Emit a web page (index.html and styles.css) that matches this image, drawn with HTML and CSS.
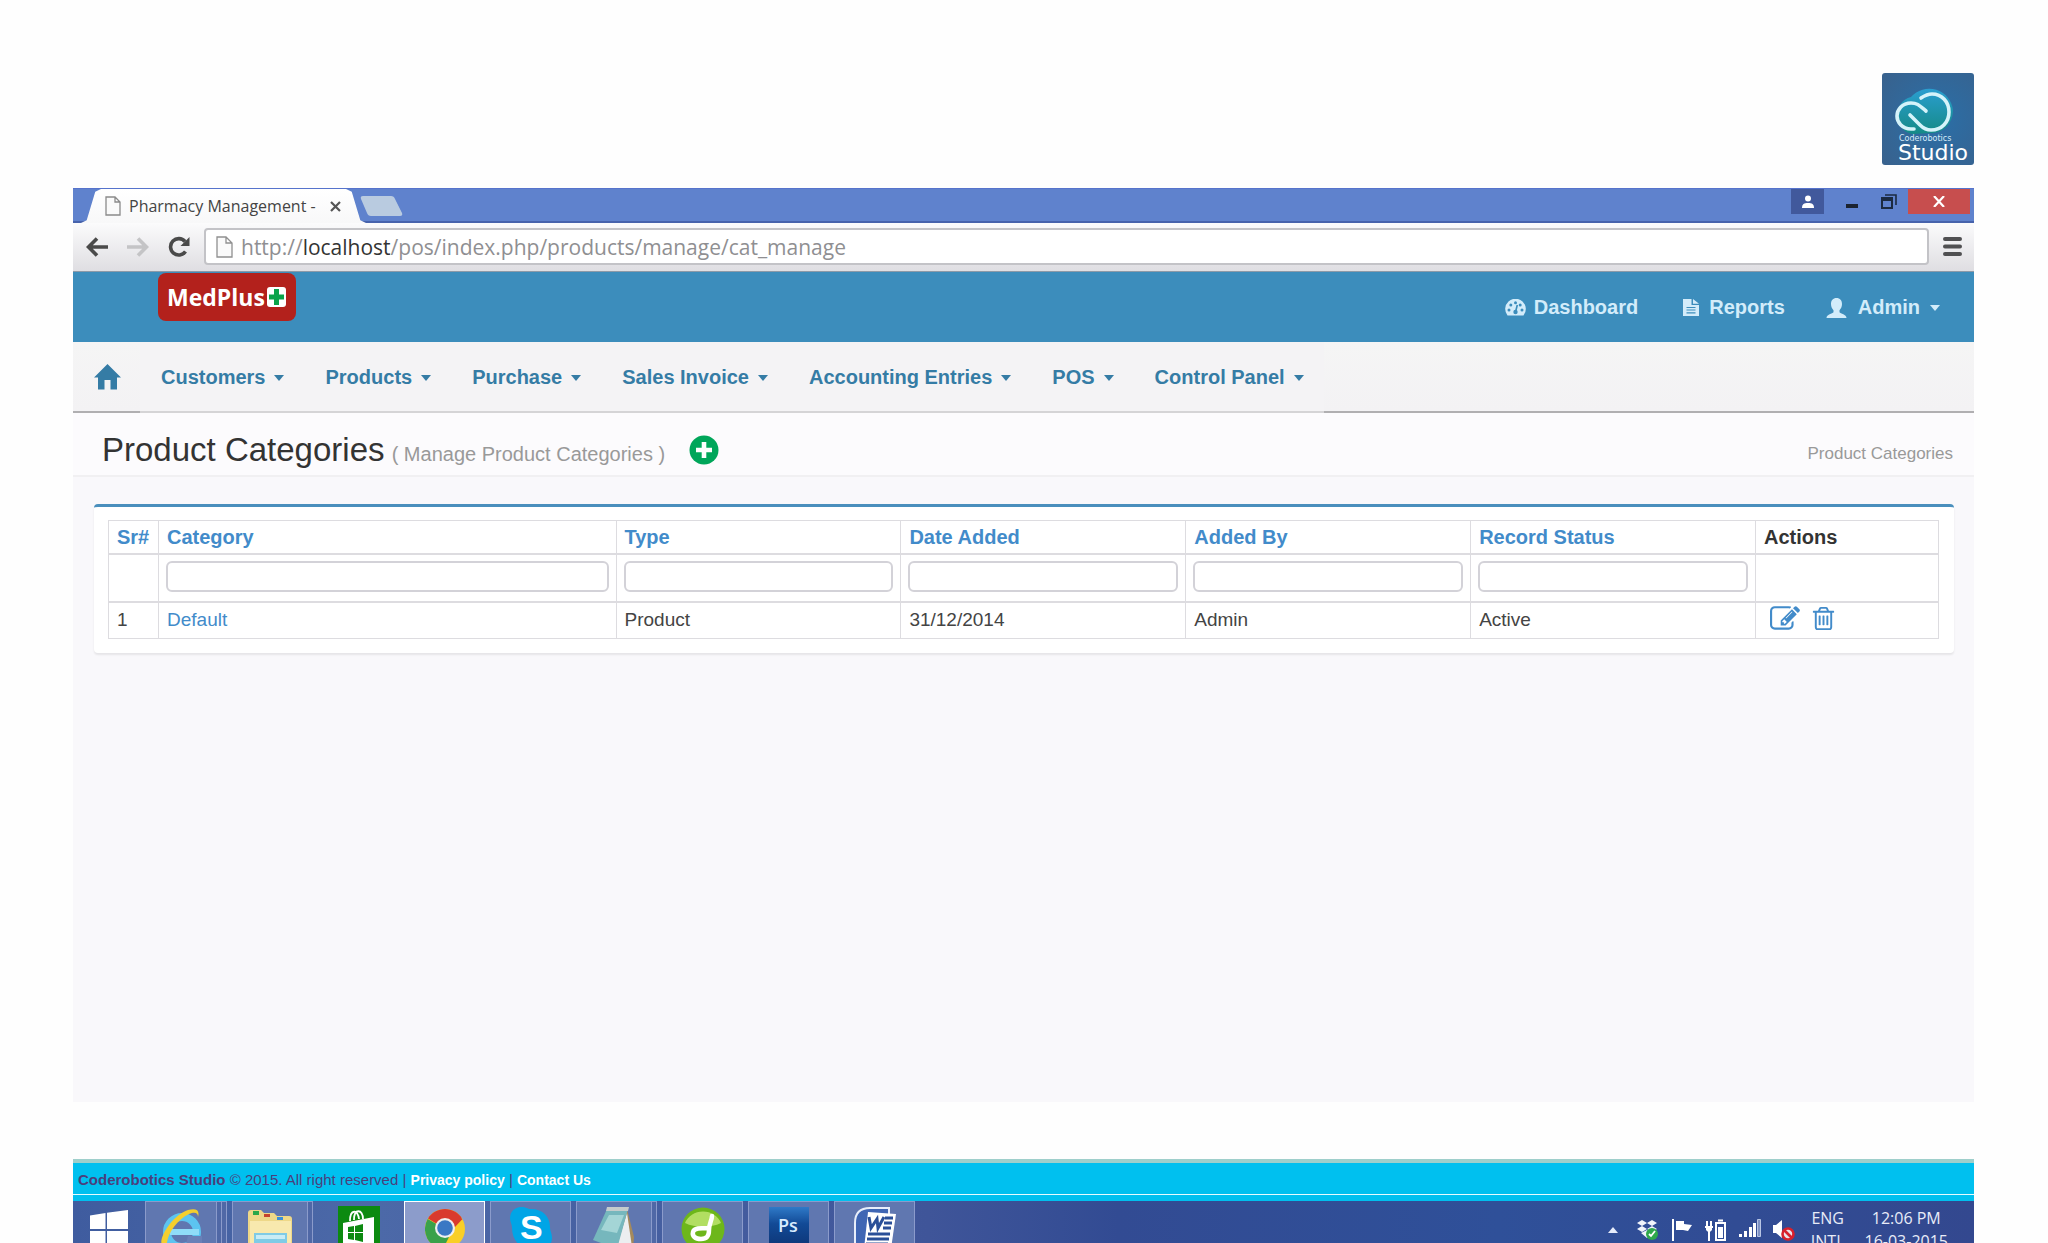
FILE: index.html
```html
<!DOCTYPE html>
<html lang="en">
<head>
<meta charset="utf-8">
<title>Pharmacy Management - Product Categories</title>
<link rel="stylesheet" href="styles.css">
</head>
<body>
<div class="brand">
  <svg class="brand-logo" viewBox="0 0 92 92" role="img" aria-label="Coderobotics Studio">
    <defs>
      <radialGradient id="tile" cx=".6" cy=".5" r=".8"><stop offset="0" stop-color="#2a6fa8"/><stop offset="1" stop-color="#39618c"/></radialGradient>
      <linearGradient id="cloud" x1="0" y1="0" x2="0" y2="1"><stop offset="0" stop-color="#2a9ed0"/><stop offset="1" stop-color="#158a86"/></linearGradient>
    </defs>
    <rect width="92" height="92" rx="3" fill="url(#tile)"/>
    <path d="M30 61a19 19 0 0 1-1-37 24 24 0 0 1 42 13c0 13-9 23-22 23z" fill="url(#cloud)"/>
    <g fill="none" stroke="#d5f3fa" stroke-width="3.6" stroke-linecap="round">
      <path d="M32 56H29C20 56 15 49 15 43S20 30 29 30C36 30 38 33 44 38"/>
      <path d="M28 42L38 52C41 55 44 57 49 57C60 57 67 49 67 39S60 21 50 21C45 21 42 23 39 25"/>
    </g>
    <text x="17" y="68" class="logo-small">Coderobotics</text>
    <text x="16" y="87" class="logo-large">Studio</text>
  </svg>
</div>

<div class="window">
  <div class="tabstrip">
    <div class="tab">
      <svg width="16" height="20" viewBox="0 0 16 20"><path d="M1 1h9l5 5v13H1zM10 1v5h5" fill="#fafafa" stroke="#8a8a8a" stroke-width="1.3"/></svg>
      <span class="tab-title">Pharmacy Management -</span>
      <button class="tab-close" aria-label="Close tab"><svg width="11" height="11" viewBox="0 0 11 11"><path d="M1 1l9 9M10 1l-9 9" stroke="#555" stroke-width="2.2"/></svg></button>
    </div>
    <button class="new-tab" aria-label="New tab"><svg width="43" height="20" viewBox="0 0 43 20"><path d="M3 0h28q3 0 4 3l7 14q1 3-2 3H11q-3 0-4-3L1 3q-1-3 2-3z" fill="#b9cbe0"/></svg></button>
    <div class="window-controls">
      <button class="ctl ctl-user" aria-label="User"><svg width="14" height="14" viewBox="0 0 14 14" fill="#fff"><circle cx="7" cy="3.5" r="3"/><path d="M1 13c0-4 2-5 6-5s6 1 6 5z"/></svg></button>
      <button class="ctl ctl-min" aria-label="Minimize"><svg width="12" height="12" viewBox="0 0 12 12"><path d="M0 8h12v4H0z" fill="#1b2330"/></svg></button>
      <button class="ctl ctl-max" aria-label="Restore"><svg width="16" height="16" viewBox="0 0 16 16" fill="none" stroke="#1b2a40" stroke-width="2"><path d="M1 4h10v10H1zM1 6h10"/><path d="M4 1h11v10" stroke-width="1.6"/></svg></button>
      <button class="ctl ctl-close" aria-label="Close"><svg width="12" height="11" viewBox="0 0 12 11"><path d="M1 0l10 11M11 0L1 11" stroke="#fff" stroke-width="2.2"/></svg></button>
    </div>
  </div>

  <div class="toolbar">
    <button class="tool" aria-label="Back"><svg width="22" height="20" viewBox="0 0 22 20" fill="none" stroke="#4a4a4a" stroke-width="3.6"><path d="M3 10h19M11 1.500l-8.500 8.500 8.500 8.500"/></svg></button>
    <button class="tool" aria-label="Forward"><svg width="22" height="20" viewBox="0 0 22 20" fill="none" stroke="#c4c4c6" stroke-width="3.600"><path d="M0 10h19M11 1.500l8.500 8.500-8.500 8.500"/></svg></button>
    <button class="tool" aria-label="Reload"><svg width="22" height="22" viewBox="0 0 22 22"><path d="M17.500 15.500A8.200 8.200 0 1 1 17 5.500" fill="none" stroke="#4a4a4a" stroke-width="3.600"/><path d="M21.500 1v9h-9z" fill="#4a4a4a"/></svg></button>
    <div class="omnibox">
      <svg width="17" height="22" viewBox="0 0 17 22"><path d="M1 1h9l6 6v14H1zM10 1v6h6" fill="#fafafa" stroke="#909090" stroke-width="1.300"/></svg>
      <span class="url">http://<b>localhost</b>/pos/index.php/products/manage/cat_manage</span>
    </div>
    <button class="menu" aria-label="Menu"><svg width="19" height="19" viewBox="0 0 19 19" stroke="#505052" stroke-width="4" stroke-linecap="round"><path d="M2 2h15M2 9.500h15M2 17h15"/></svg></button>
  </div>

  <header class="header">
    <a class="medplus" href="#">MedPlus<svg width="19" height="20" viewBox="0 0 19 20"><rect width="19" height="20" rx="3" fill="#fff"/><path d="M9.500 2v16M2 10h15" stroke="#0aa34a" stroke-width="5"/></svg></a>
    <nav class="header-links">
      <a href="#"><svg width="21" height="17" viewBox="0 0 21 17"><path d="M2.500 16.500A10.300 10.300 0 1 1 18.500 16.500z" fill="#d3ecfa"/><g fill="#3c8dbc"><circle cx="4" cy="11" r="1.500"/><circle cx="5.800" cy="6" r="1.500"/><circle cx="10.500" cy="3.700" r="1.500"/><circle cx="15.200" cy="6" r="1.500"/><circle cx="17" cy="11" r="1.500"/><circle cx="10.500" cy="13" r="2.200"/></g><path d="M10.500 13l1.800-7" stroke="#3c8dbc" stroke-width="1.600"/></svg>Dashboard</a>
      <a href="#" class="link-reports"><svg width="16" height="17" viewBox="0 0 16 17"><path d="M0 0h8.500v6H16v11H0zM10 0l6 4.800h-6z" fill="#d3ecfa"/><path d="M3.500 8.500h9M3.500 11h9M3.500 13.800h9" stroke="#3c8dbc" stroke-width="1.200"/></svg>Reports</a>
      <a href="#" class="link-admin"><svg width="21" height="20" viewBox="0 0 21 20"><path d="M10.500 0c3.500 0 5.500 2.500 5.500 6 0 2.800-1.200 5-2.500 6.200v2c1 1.200 7 2.200 7 5.800H.5c0-3.600 6-4.600 7-5.800v-2C6.200 11 5 8.800 5 6c0-3.500 2-6 5.500-6z" fill="#d3ecfa"/></svg>Admin<i class="caret"></i></a>
    </nav>
  </header>

  <nav class="mainnav">
    <a class="home" href="#" aria-label="Home"><svg width="27" height="26" viewBox="0 0 27 26"><path d="M13.500 0L27 13.500h-4V25.500h-6.500V16h-6v9.500H4V13.500H0z" fill="#357ca5"/></svg></a>
    <a class="item" href="#">Customers<i class="caret"></i></a>
    <a class="item" href="#">Products<i class="caret"></i></a>
    <a class="item" href="#">Purchase<i class="caret"></i></a>
    <a class="item" href="#">Sales Invoice<i class="caret"></i></a>
    <a class="item" href="#">Accounting Entries<i class="caret"></i></a>
    <a class="item" href="#">POS<i class="caret"></i></a>
    <a class="item" href="#">Control Panel<i class="caret"></i></a>
  </nav>

  <main class="content">
    <div class="page-head">
      <h1>Product Categories <small>( Manage Product Categories )</small></h1>
      <a class="add" href="#" aria-label="Add category"><svg width="30" height="30" viewBox="0 0 30 30"><circle cx="15" cy="15" r="14.500" fill="#00a65a"/><path d="M15 7v16M7 15h16" stroke="#fff" stroke-width="4.600"/></svg></a>
      <span class="crumb">Product Categories</span>
    </div>
    <section class="box">
      <table>
        <colgroup><col class="c-sr"><col class="c-cat"><col><col><col><col><col class="c-act"></colgroup>
        <thead>
          <tr><th><a href="#">Sr#</a></th><th><a href="#">Category</a></th><th><a href="#">Type</a></th><th><a href="#">Date Added</a></th><th><a href="#">Added By</a></th><th><a href="#">Record Status</a></th><th>Actions</th></tr>
          <tr class="filters"><td></td><td><input type="text" aria-label="Category"></td><td><input type="text" aria-label="Type"></td><td><input type="text" aria-label="Date Added"></td><td><input type="text" aria-label="Added By"></td><td><input type="text" aria-label="Record Status"></td><td></td></tr>
        </thead>
        <tbody>
          <tr><td>1</td><td><a href="#">Default</a></td><td>Product</td><td>31/12/2014</td><td>Admin</td><td>Active</td>
          <td><div class="actions">
            <a href="#" aria-label="Edit"><svg width="30" height="30" viewBox="0 0 1792 1792" fill="#428bca"><path d="M888 1184l116-116-152-152-116 116v56h96v96h56zm440-720q-16-16-33 1l-350 350q-17 17-1 33t33-1l350-350q17-17 1-33zm80 594v190q0 119-84.500 203.500t-203.500 84.500h-832q-119 0-203.500-84.500t-84.500-203.500v-832q0-119 84.500-203.500t203.500-84.500h832q63 0 117 25 15 7 18 23 3 17-9 29l-49 49q-14 14-32 8-23-6-45-6h-832q-66 0-113 47t-47 113v832q0 66 47 113t113 47h832q66 0 113-47t47-113v-126q0-13 9-22l64-64q15-15 35-7t20 29zm-96-738l288 288-672 672h-288v-288zm444 132l-92 92-288-288 92-92q28-28 68-28t68 28l152 152q28 28 28 68t-28 68z"/></svg></a>
            <a href="#" aria-label="Delete"><svg width="27" height="27" viewBox="0 0 1792 1792" fill="#428bca"><path d="M704 736v576q0 14-9 23t-23 9h-64q-14 0-23-9t-9-23v-576q0-14 9-23t23-9h64q14 0 23 9t9 23zm256 0v576q0 14-9 23t-23 9h-64q-14 0-23-9t-9-23v-576q0-14 9-23t23-9h64q14 0 23 9t9 23zm256 0v576q0 14-9 23t-23 9h-64q-14 0-23-9t-9-23v-576q0-14 9-23t23-9h64q14 0 23 9t9 23zm128 724v-948h-896v948q0 22 7 40.500t14.500 27 10.500 8.500h832q3 0 10.500-8.500t14.500-27 7-40.500zm-672-1076h448l-48-117q-7-9-17-11h-317q-10 2-17 11zm928 32v64q0 14-9 23t-23 9h-96v948q0 83-47 143.500t-113 60.500h-832q-66 0-113-58.500t-47-141.500v-952h-96q-14 0-23-9t-9-23v-64q0-14 9-23t23-9h309l70-167q15-37 54-63t79-26h320q40 0 79 26t54 63l70 167h309q14 0 23 9t9 23z"/></svg></a>
          </div></td></tr>
        </tbody>
      </table>
    </section>
  </main>

  <footer class="footer"><p><b>Coderobotics Studio</b> © 2015. All right reserved | <a href="#">Privacy policy</a> | <a href="#">Contact Us</a></p></footer>
</div>

<div class="taskbar">
  <button class="task plain start" aria-label="Start"><svg width="38" height="40" viewBox="0 0 38 40" fill="#fff"><path d="M0 5.500L15.500 3v16H0zM17 2.800L38 0v19H17zM0 21h15.500v16L0 34.500zM17 21h21v19l-21-3z"/></svg></button>
  <button class="task stack2" aria-label="Internet Explorer"><svg width="46" height="46" viewBox="0 0 46 46"><circle cx="24" cy="25" r="15" fill="none" stroke="#5cc4f0" stroke-width="8"/><path d="M12 22h29v6H12z" fill="#8fdcf8"/><path d="M30 29h14v8H28z" fill="#6a80b8"/><path d="M5 40C-2 34 14 8 30 3c8-2 12 0 10 7 0-5-4-5-9-3C18 13 7 30 9 41z" fill="#f4cf2e"/></svg></button>
  <button class="task stack1" aria-label="File Explorer"><svg width="46" height="42" viewBox="0 0 46 42"><path d="M1 6q0-3 3-3h10l3 3h10l3 3h12q3 0 3 3v30H1z" fill="#eed888"/><path d="M3 14h41v28H3z" fill="#f8e9ae"/><path d="M6 4h6v4H6z" fill="#2aa84a"/><path d="M17 7h6v3h-6z" fill="#c5442e"/><path d="M30 10h6v3h-6z" fill="#3b8fd8"/><path d="M7 26h33v16H7z" fill="#7fcbe6"/><path d="M9 28h29v4H9z" fill="#c8ecf6"/></svg></button>
  <button class="task plain" aria-label="Store"><svg width="42" height="42" viewBox="0 0 42 42"><path d="M0 0h42v42H0z" fill="#0c8a10"/><path d="M5 17l31-6v31H5z" fill="#fff"/><path d="M12 15c0-12 8-12 9-2M16 14c0-12 9-11 9-1" fill="none" stroke="#fff" stroke-width="1.800"/><path d="M10 21l6-1v6h-6zM17 20l8-2v8h-8zM10 27h6v7l-6-1zM17 27h8v9l-8-2z" fill="#0c8a10"/></svg></button>
  <button class="task active" aria-label="Chrome"><svg width="40" height="42" viewBox="0 -2 40 42"><circle cx="20" cy="20" r="20" fill="#f9cf26"/><path d="M20 20L3 9.500A20 20 0 0 1 37 9.500z" fill="#d93a2e"/><path d="M2.700 10A20 20 0 0 0 18 40l6-12-4-8z" fill="#3aa14a"/><path d="M20 10h17.500L30 18z" fill="#d93a2e"/><circle cx="20" cy="19" r="10" fill="#f0f0f0"/><circle cx="20" cy="19" r="7.800" fill="#3a78c4"/></svg></button>
  <button class="task" aria-label="Skype"><svg width="42" height="42" viewBox="0 0 42 42"><path d="M12 0c4 0 5 2 9 2 12 0 19 8 19 18 0 4 2 6 2 11a11 11 0 0 1-11 11H21C9 42 2 32 2 21 2 17 0 15 0 11A11 11 0 0 1 12 0z" fill="#00a5e6"/><text x="10" y="32" class="skype-s">S</text></svg></button>
  <button class="task stack1" aria-label="Notepad"><svg width="42" height="42" viewBox="0 0 42 42"><path d="M34 2l7 28-1 12H24z" fill="#a58a5c"/><path d="M34 6l5 34-16 2z" fill="#eceef0"/><path d="M14 2h21L24 42 0 33z" fill="#76b7bd"/><path d="M16 8h15l-7 18L8 23z" fill="#a4d5d6"/><path d="M14 0h22l-1 4H13z" fill="#c5cccc"/></svg></button>
  <button class="task" aria-label="Downloader"><svg width="44" height="44" viewBox="0 0 44 44"><circle cx="22" cy="22" r="21.500" fill="#6db71a"/><path d="M4 16a19 17 0 0 1 36 0c-10 5-26 5-36 0z" fill="#b2de62"/><path d="M31 9c0 4-3 8-3 14s-2 9-8 9-9-3-8-7 7-4 15-4" fill="none" stroke="#fff" stroke-width="4.500" stroke-linecap="round"/></svg></button>
  <button class="task" aria-label="Photoshop"><svg width="40" height="42" viewBox="0 0 40 42"><defs><linearGradient id="ps" x1="0" y1="0" x2="0" y2="1"><stop offset="0" stop-color="#2f7ac8"/><stop offset=".4" stop-color="#124a96"/><stop offset="1" stop-color="#0d3474"/></linearGradient></defs><path d="M0 0h40v42H0z" fill="url(#ps)"/><text x="9" y="25" class="ps">Ps</text></svg></button>
  <button class="task" aria-label="Word"><svg width="42" height="42" viewBox="0 0 42 42"><path d="M1 42V16Q1 1 16 1h19v8H18l-4 33z" fill="#3f66b4" stroke="#e8eefa" stroke-width="2"/><path d="M14 5l28 2-5 35H10z" fill="#fff"/><path d="M15 10l2 11 6-9 1 9 6-11M31 11h8M30 16h8M29 21h8M14 27h22M13 32h22M12 37h22" fill="none" stroke="#2a4f98" stroke-width="3"/></svg></button>

  <div class="tray">
    <svg width="10" height="6" viewBox="0 0 10 6"><path d="M5 0l5 6H0z" fill="#e6ecfa"/></svg>
    <svg width="22" height="22" viewBox="0 0 22 22"><path d="M5 1l5 3-5 3-5-3zM15 1l5 3-5 3-5-3zM5 7l5 3-5 3-5-3zM15 7l5 3-5 3-5-3zM4 14l6-3 6 3-6 5z" fill="#f0f4fb"/><circle cx="15" cy="15" r="6" fill="#2fa84c"/><path d="M12 15l2 2 4-5" stroke="#fff" stroke-width="1.800" fill="none"/></svg>
    <svg width="22" height="22" viewBox="0 0 22 22"><path d="M1 0h2v22H1zM5 2h8v3l8 1-4 6-5-1H5z" fill="#fff"/></svg>
    <svg width="22" height="22" viewBox="0 0 22 22"><path d="M2 2v5M6 2v5M0 8h8M4 8v14" stroke="#fff" stroke-width="2"/><path d="M1 7h6v4q-3 4-6 0z" fill="#fff"/><path d="M11 4h9v17h-9zM13 1.500h5" fill="none" stroke="#fff" stroke-width="2"/><path d="M13 8h5v11h-5z" fill="#fff"/></svg>
    <svg width="22" height="18" viewBox="0 0 22 18"><path d="M0 15h3v3H0zM5 12h3v6H5zM10 8h3v10h-3zM14 4h3v14h-3z" fill="#fff"/><path d="M18.500.5h3v17h-3z" fill="#7f93c4" stroke="#b8c5e4"/></svg>
    <svg width="22" height="22" viewBox="0 0 22 22"><path d="M0 6h3l6-5v18l-6-5H0z" fill="#fff"/><circle cx="15" cy="15" r="5.500" fill="#e9e3ea" stroke="#d8202c" stroke-width="2.600"/><path d="M11 11l8 8" stroke="#d8202c" stroke-width="2.600"/></svg>
    <div class="lang">ENG<br>INTL</div>
    <div class="clock">12:06 PM<br>16-03-2015</div>
  </div>
</div>
</body>
</html>
```
FILE: styles.css
```css
* { box-sizing: border-box; }
html { height: 100%; }
body {
  margin: 0;
  height: 100%;
  padding: 73px 74px 0 73px;
  display: flex;
  flex-direction: column;
  overflow: hidden;
  background: #fefefe;
  color: #444;
  font-family: "Liberation Sans", Arial, sans-serif;
  font-size: 19px;
}
svg { display: block; flex: none; }
a { text-decoration: none; color: #428bca; }
button { border: 0; padding: 0; margin: 0; background: none; font: inherit; display: flex; align-items: center; justify-content: center; }

.brand { display: flex; justify-content: flex-end; padding-bottom: 23px; }
.brand-logo { width: 92px; height: 92px; }
.logo-small { font: 8px "DejaVu Sans", sans-serif; fill: #d8ecfa; }
.logo-large { font: 22px/1 "DejaVu Sans", sans-serif; fill: #fff; }

.window { flex: 1; min-height: 0; display: flex; flex-direction: column; }

/* Browser chrome */
.tabstrip {
  display: flex;
  height: 35px;
  background: #5f82cd;
  border-bottom: 2px solid #4763ac;
  border-top: 1px solid #5673cc;
}
.tab {
  display: flex;
  align-items: center;
  width: 285px;
  height: 34px;
  margin-left: 8px;
  padding-left: 24px;
  background: linear-gradient(#fff, #f8f8f9);
  clip-path: polygon(0 100%, 2% 92%, 5% 8%, 7% 0, 93% 0, 95% 8%, 98% 92%, 100% 100%);
}
.tab-title { margin-left: 8px; width: 194px; color: #444; font: 16px "Open Sans", sans-serif; white-space: nowrap; }
.tab-close { margin-left: 7px; }
.new-tab { align-self: flex-start; margin: 7px 0 0 -6px; }
.window-controls { display: flex; align-items: flex-start; margin-left: auto; padding-right: 4px; }
.ctl { height: 25px; }
.ctl-user { width: 33px; background: #41599c; }
.ctl-min { width: 56px; }
.ctl-max { width: 28px; margin-right: 5px; margin-left: -5px; }
.ctl-close { width: 62px; background: #c74e4e; }

.toolbar {
  display: flex;
  align-items: center;
  height: 49px;
  padding: 0 12px 1px 13px;
  background: linear-gradient(#fbfbfc, #dfdee2);
  border-bottom: 1px solid #8c9aa8;
}
.tool { width: 22px; margin-right: 19px; }
.tool + .tool + .tool { margin-right: 14px; }
.omnibox {
  flex: 1;
  display: flex;
  align-items: center;
  height: 37px;
  padding-left: 10px;
  background: #fff;
  border: 2px solid #c3c3c7;
  border-radius: 4px;
}
.url { margin-left: 8px; font: 21px "Open Sans", sans-serif; color: #8f8f92; white-space: nowrap; }
.url b { font-weight: 400; color: #333; }
.menu { width: 19px; margin-left: 14px; }

/* Application header */
.header { display: flex; align-items: flex-start; height: 70px; padding: 1px 34px 0 85px; background: #3c8dbc; }
.medplus {
  display: flex;
  align-items: center;
  gap: 2px;
  height: 48px;
  padding: 0 10px 0 9px;
  border-radius: 8px;
  background: #b3211c;
  color: #fff;
  font: 700 23px "Open Sans", sans-serif;
}
.header-links { display: flex; align-self: center; margin-left: auto; font-size: 20px; font-weight: 700; }
.header-links a { display: flex; align-items: center; gap: 8px; color: #d3ecfa; margin-left: 45px; }
.header-links .link-reports { gap: 10px; }
.header-links .link-admin { gap: 11px; margin-left: 41px; }
.header-links .caret { margin-left: -1px; }
.caret { border: 5px solid transparent; border-top: 6px solid; border-bottom: 0; }

.mainnav {
  display: flex;
  height: 71px;
  background: linear-gradient(#f5f5f5, #f3f2f4);
  border-bottom: 2px solid #b0afb1;
}
.mainnav a { display: flex; align-items: center; color: #357ca5; }
.home { width: 67px; padding-left: 21px; }
.item { gap: 9px; height: 71px; padding: 2px 20px 0 21px; font-size: 20px; font-weight: 700; border-bottom: 2px solid #d5d4d6; background: #f4f3f5; }

/* Page */
.content { flex: 1; min-height: 0; margin-bottom: 57px; background: #f9f8fb; }
.page-head { display: flex; align-items: center; height: 64px; padding: 12px 21px 0 29px; background: #fcfbfd; border-bottom: 2px solid #f1f0f2; }
h1 { margin: 0; font-size: 33px; font-weight: 400; color: #333; }
h1 small { margin-left: -2px; font-size: 20px; color: #999; }
.add { margin-left: 24px; }
.crumb { margin: 7px 0 0 auto; font-size: 17px; color: #999; }

.box {
  margin: 27px 20px 0 21px;
  padding: 13px 15px 14px 14px;
  background: #fff;
  border-top: 3px solid #4a8fbd;
  border-radius: 4px;
  box-shadow: 0 2px 2px rgba(0, 0, 0, .08);
}
table { width: 100%; table-layout: fixed; border-collapse: collapse; }
.c-sr { width: 50px; }
.c-cat { width: 25%; }
.c-act { width: 10%; }
th, td { border: 1px solid #dddce0; border-bottom-width: 2px; padding: 0 8px; text-align: left; line-height: 24px; }
th { height: 33px; font-size: 20px; color: #333; }
td { height: 37px; }
tbody td { border-bottom-width: 1px; }
.filters td { height: 48px; padding: 0 7px; }
.filters input { display: block; width: 100%; height: 31px; margin-bottom: 3px; border: 2px solid #d3d2d8; border-radius: 6px; background: #fff; font: inherit; }
.actions { display: flex; align-items: center; gap: 10px; padding: 0 0 3px 6px; }

.footer { padding-bottom: 6px; background: #00c0ef; border-top: 4px solid #9fcfcb; color: #4a3f7c; font-size: 15px; }
.footer p { margin: 0; height: 32px; padding: 3px 5px 0; line-height: 27px; border-bottom: 1px solid #e6fbff; }
.footer a { color: #fff; font-size: 14px; font-weight: 700; }

/* Taskbar */
.taskbar {
  flex: none;
  display: flex;
  align-items: flex-start;
  height: 42px;
  overflow: hidden;
  background: linear-gradient(90deg, #3f5c9f, #4c69a8 16%, #3f5599 45%, #324b93 55%, #2f5099 75%, #33488f);
}
.task {
  width: 81px;
  height: 60px;
  margin-right: 5px;
  padding-top: 5px;
  align-items: flex-start;
  flex: none;
  border: 1px solid #8b9bcb;
  background: #6077b0;
}
.plain { border: 0; background: none; }
.start { width: 72px; margin-right: 0; padding-top: 9px; }
.stack1 { box-shadow: 5px 0 0 -1px #5068a6, 5px 0 0 0 #8b9bcb; width: 76px; margin-right: 10px; }
.stack2 { box-shadow: 5px 0 0 -1px #5068a6, 5px 0 0 0 #8b9bcb, 10px 0 0 -1px #5068a6, 10px 0 0 0 #8b9bcb; width: 72px; margin-right: 15px; }
.active { border: 1px solid #fff; background: #8c9ccb; }
.skype-s { font: 700 34px/1 "Liberation Sans", sans-serif; fill: #fff; }
.ps { font: 600 18px "Open Sans", sans-serif; fill: #d8ecff; }
.tray { display: flex; align-items: flex-start; gap: 12px; margin-left: auto; padding: 6px 26px 0 0; color: #e8ecf8; font: 16px/23px "Open Sans", sans-serif; text-align: center; }
.tray svg { margin-top: 12px; }
.tray svg:first-child { margin: 20px 7px 0 0; }
.lang { margin: 0 8px 0 4px; }
```
